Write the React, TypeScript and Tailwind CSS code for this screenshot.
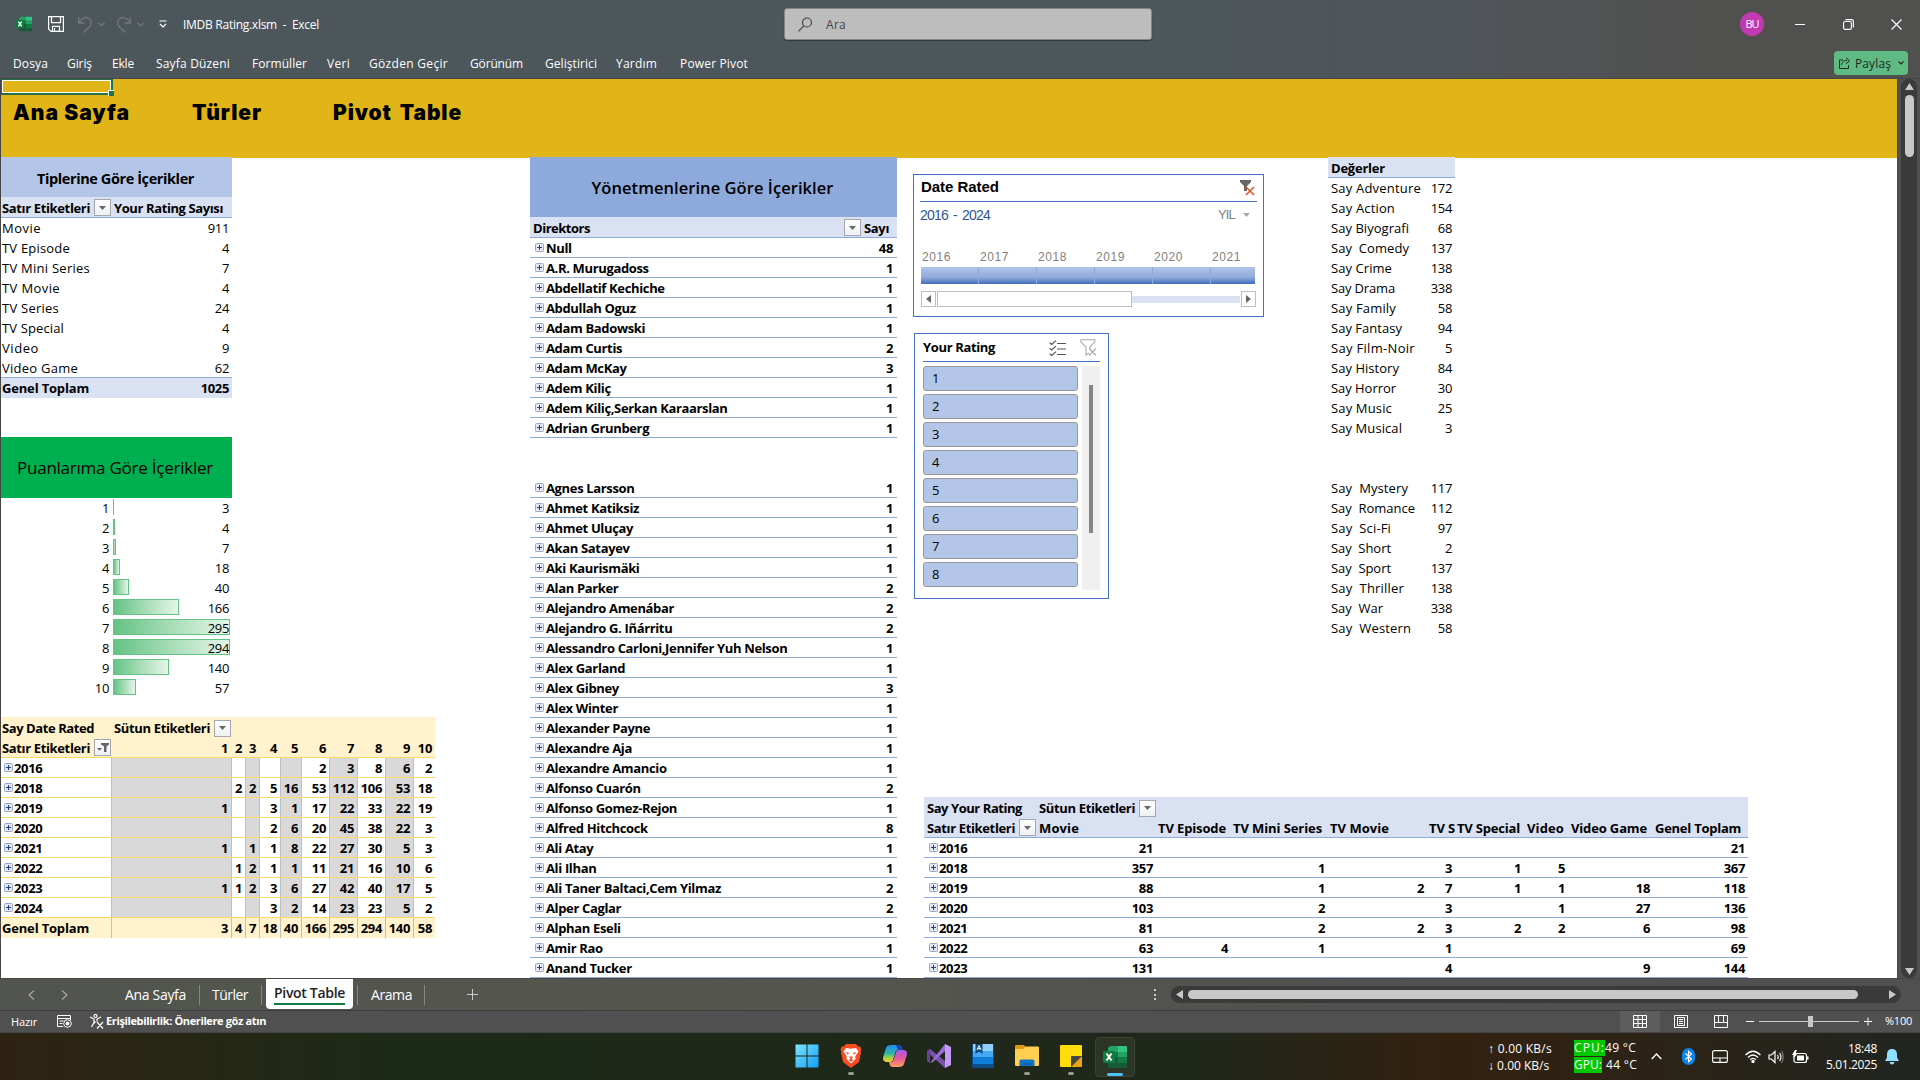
import React, { useLayoutEffect, useRef } from "react";

/** Text whose tracking is tuned so that it takes up the given width. */
function Fit({ w, className = "", children }: { w: number; className?: string; children: string }) {
  const ref = useRef<HTMLSpanElement>(null);
  useLayoutEffect(() => {
    const el = ref.current;
    if (!el) return;
    el.style.letterSpacing = "0px";
    const natural = el.getBoundingClientRect().width;
    el.style.letterSpacing = `${(w - natural) / children.length}px`;
  }, [w, children]);
  return (
    <span ref={ref} className={`inline-block shrink-0 whitespace-pre ${className}`}>
      {children}
    </span>
  );
}

const Gap = ({ w }: { w: number }) => <div className="shrink-0" style={{ width: w }} />;

function DropButton({ filtered = false }: { filtered?: boolean }) {
  return (
    <span className="flex h-[17px] w-[17px] shrink-0 items-center justify-center border border-[#a3a8b0] bg-linear-to-b from-white to-[#eef0f4]">
      {filtered ? (
        <svg width="12" height="11" viewBox="0 0 12 11" fill="#666">
          <path d="M4 1h8v1.500L9.500 4.500V10H7V4.500L4 2.500z" />
          <path d="M0 6h5L2.500 8.800z" />
        </svg>
      ) : (
        <svg width="7" height="4" viewBox="0 0 7 4">
          <path d="M0 0h7L3.500 4z" fill="#666" />
        </svg>
      )}
    </span>
  );
}

const Plus = () => (
  <svg className="mb-[1px] shrink-0" width="9" height="9" viewBox="0 0 9 9">
    <rect x=".5" y=".5" width="8" height="8" rx="1" fill="#e4e8ee" stroke="#9aa9c2" />
    <path d="M2 4.500h5M4.500 2v5" stroke="#26427c" />
  </svg>
);

/* ---------- data ---------- */

const types: [string, number, number][] = [
  ["Movie", 911, 39],
  ["TV Episode", 4, 68],
  ["TV Mini Series", 7, 88],
  ["TV Movie", 4, 58],
  ["TV Series", 24, 57],
  ["TV Special", 4, 62],
  ["Video", 9, 37],
  ["Video Game", 62, 76],
];

const scores: [number, number, number][] = [
  [1, 3, 1],
  [2, 4, 2],
  [3, 7, 3],
  [4, 18, 7],
  [5, 40, 16],
  [6, 166, 66],
  [7, 295, 117],
  [8, 294, 117],
  [9, 140, 56],
  [10, 57, 23],
];

const yearCols = [120, 14, 14, 21, 21, 28, 28, 28, 28, 22];
const years: [string, string[]][] = [
  ["2016", ["", "", "", "", "", "2", "3", "8", "6", "2"]],
  ["2018", ["", "2", "2", "5", "16", "53", "112", "106", "53", "18"]],
  ["2019", ["1", "", "", "3", "1", "17", "22", "33", "22", "19"]],
  ["2020", ["", "", "", "2", "6", "20", "45", "38", "22", "3"]],
  ["2021", ["1", "", "1", "1", "8", "22", "27", "30", "5", "3"]],
  ["2022", ["", "1", "2", "1", "1", "11", "21", "16", "10", "6"]],
  ["2023", ["1", "1", "2", "3", "6", "27", "42", "40", "17", "5"]],
  ["2024", ["", "", "", "3", "2", "14", "23", "23", "5", "2"]],
];

const directors: [string, number][] = [
  ["Null", 48],
  ["A.R. Murugadoss", 1],
  ["Abdellatif Kechiche", 1],
  ["Abdullah Oguz", 1],
  ["Adam Badowski", 1],
  ["Adam Curtis", 2],
  ["Adam McKay", 3],
  ["Adem Kiliç", 1],
  ["Adem Kiliç,Serkan Karaarslan", 1],
  ["Adrian Grunberg", 1],
];
const directors2: [string, number][] = [
  ["Agnes Larsson", 1],
  ["Ahmet Katiksiz", 1],
  ["Ahmet Uluçay", 1],
  ["Akan Satayev", 1],
  ["Aki Kaurismäki", 1],
  ["Alan Parker", 2],
  ["Alejandro Amenábar", 2],
  ["Alejandro G. Iñárritu", 2],
  ["Alessandro Carloni,Jennifer Yuh Nelson", 1],
  ["Alex Garland", 1],
  ["Alex Gibney", 3],
  ["Alex Winter", 1],
  ["Alexander Payne", 1],
  ["Alexandre Aja", 1],
  ["Alexandre Amancio", 1],
  ["Alfonso Cuarón", 2],
  ["Alfonso Gomez-Rejon", 1],
  ["Alfred Hitchcock", 8],
  ["Ali Atay", 1],
  ["Ali Ilhan", 1],
  ["Ali Taner Baltaci,Cem Yilmaz", 2],
  ["Alper Caglar", 2],
  ["Alphan Eseli", 1],
  ["Amir Rao", 1],
  ["Anand Tucker", 1],
];

const genres: [string, number, number][] = [
  ["Say Adventure", 172, 90],
  ["Say Action", 154, 64],
  ["Say Biyografi", 68, 78],
  ["Say  Comedy", 137, 78],
  ["Say Crime", 138, 61],
  ["Say Drama", 338, 64],
  ["Say Family", 58, 65],
  ["Say Fantasy", 94, 71],
  ["Say Film-Noir", 5, 84],
  ["Say History", 84, 68],
  ["Say Horror", 30, 65],
  ["Say Music", 25, 61],
  ["Say Musical", 3, 71],
];
const genres2: [string, number, number][] = [
  ["Say  Mystery", 117, 77],
  ["Say  Romance", 112, 84],
  ["Say  Sci-Fi", 97, 60],
  ["Say  Short", 2, 60],
  ["Say  Sport", 137, 60],
  ["Say  Thriller", 138, 73],
  ["Say  War", 338, 52],
  ["Say  Western", 58, 80],
];

const typeCols: [string, number, number, number][] = [
  ["Movie", 120, 40, 3],
  ["TV Episode", 75, 68, 2],
  ["TV Mini Series", 97, 89, 2],
  ["TV Movie", 99, 59, 2],
  ["TV S", 28, 26, 2],
  ["TV Special", 69, 63, 2],
  ["Video", 44, 37, 3],
  ["Video Game", 85, 76, 3],
  ["Genel Toplam", 95, 86, 2],
];
const ratings: [string, string[]][] = [
  ["2016", ["21", "", "", "", "", "", "", "", "21"]],
  ["2018", ["357", "", "1", "", "3", "1", "5", "", "367"]],
  ["2019", ["88", "", "1", "2", "7", "1", "1", "18", "118"]],
  ["2020", ["103", "", "2", "", "3", "", "1", "27", "136"]],
  ["2021", ["81", "", "2", "2", "3", "2", "2", "6", "98"]],
  ["2022", ["63", "4", "1", "", "1", "", "", "", "69"]],
  ["2023", ["131", "", "", "", "4", "", "", "9", "144"]],
];

/* ---------- title bar ---------- */

const menu: [string, number, number][] = [
  ["Dosya", 35, 19],
  ["Giriş", 25, 20],
  ["Ekle", 22, 22],
  ["Sayfa Düzeni", 74, 22],
  ["Formüller", 55, 20],
  ["Veri", 23, 19],
  ["Gözden Geçir", 79, 22],
  ["Görünüm", 53, 22],
  ["Geliştirici", 52, 19],
  ["Yardım", 41, 23],
  ["Power Pivot", 68, 0],
];

function ExcelLogo({ size }: { size: number }) {
  return (
    <svg width={size} height={size} viewBox="0 0 24 24" className="shrink-0">
      <path d="M7 1h8v6H5V3z" fill="#21a366" />
      <path d="M15 1h8q1 0 1 1v5h-9z" fill="#33c481" />
      <path d="M5 7h10v6H5z" fill="#107c41" />
      <path d="M15 7h9v5h-9z" fill="#21a366" />
      <path d="M15 12h9v6h-9z" fill="#107c41" />
      <path d="M5 12h10v6h9v4q0 1-1 1H6q-1 0-1-1z" fill="#185c37" />
      <rect x="0" y="6" width="12" height="12" rx="1" fill="#107c41" />
      <path d="M3.500 8.500l5 7M8.500 8.500l-5 7" stroke="#fff" strokeWidth="1.900" />
    </svg>
  );
}

function TitleBar() {
  return (
    <header className="h-[79px] shrink-0 border-b border-[#464646] bg-linear-to-r from-[#4c565b] from-60% via-[#50555a] via-76% to-[#50514f] to-88% font-['Open_Sans',sans-serif] text-white">
      <div className="flex h-12 items-center">
        <Gap w={16} />
        <ExcelLogo size={16} />
        <Gap w={16} />
        <svg width="16" height="16" viewBox="0 0 16 16" fill="none" stroke="#fff" strokeWidth="1.200">
          <path d="M.6.6h14.800v14.800H3L.6 13z" />
          <path d="M3.500.6v6h9v-6M4.500 15.400v-5h7v5M6.500 12v3" />
        </svg>
        <Gap w={14} />
        <svg width="14" height="17" viewBox="0 0 14 17" fill="none" stroke="#73787b" strokeWidth="1.300">
          <path d="M.7 1v6h5.800M1 6.500C4 1.500 8 .5 11 2.500s3 6 .5 8.500L5.500 16.500" />
        </svg>
        <Gap w={6} />
        <svg width="7" height="5" viewBox="0 0 7 5" fill="none" stroke="#73787b" strokeWidth="1.300">
          <path d="M.5.7l3 3 3-3" />
        </svg>
        <Gap w={12} />
        <svg width="14" height="17" viewBox="0 0 14 17" fill="none" stroke="#73787b" strokeWidth="1.300">
          <path d="M13.300 1v6H7.500M13 6.500C10 1.500 6 .5 3 2.500s-3 6-.5 8.500l6 5.500" />
        </svg>
        <Gap w={6} />
        <svg width="7" height="5" viewBox="0 0 7 5" fill="none" stroke="#73787b" strokeWidth="1.300">
          <path d="M.5.7l3 3 3-3" />
        </svg>
        <Gap w={15} />
        <svg width="8" height="8" viewBox="0 0 8 8" fill="none" stroke="#fff" strokeWidth="1.200">
          <path d="M.5 1h7M1 4l3 3 3-3" />
        </svg>
        <Gap w={16} />
        <Fit w={136} className="mt-[1px] text-[12px]">{"IMDB Rating.xlsm  -  Excel"}</Fit>
        <Gap w={465} />
        <div className="flex h-8 w-[368px] shrink-0 items-center rounded-[3px] border border-[#828688] bg-[#bdbdbd] shadow-[0_1px_1px_#30383c]">
          <Gap w={13} />
          <svg width="15" height="15" viewBox="0 0 15 15" fill="none" stroke="#444" strokeWidth="1.200">
            <circle cx="9" cy="5.500" r="4.500" />
            <path d="M5.800 8.800L.5 14.300" />
          </svg>
          <Gap w={13} />
          <Fit w={20} className="mt-[1px] text-[12px] text-[#444]">Ara</Fit>
        </div>
        <Gap w={588} />
        <div className="flex h-6 w-6 shrink-0 items-center justify-center rounded-full bg-[#c239b3] text-[11px]">
          <Fit w={13}>BU</Fit>
        </div>
        <Gap w={31} />
        <div className="h-px w-[10px] shrink-0 bg-white" />
        <Gap w={38} />
        <svg width="11" height="11" viewBox="0 0 11 11" fill="none" stroke="#fff" strokeWidth="1.100">
          <rect x=".6" y="2.500" width="7.800" height="7.900" rx="1.500" />
          <path d="M2.500.6H8.500Q10.400.6 10.400 2.500V8.500" />
        </svg>
        <Gap w={37} />
        <svg width="11" height="11" viewBox="0 0 11 11" fill="none" stroke="#fff" strokeWidth="1.100">
          <path d="M.5.5l10 10M10.500.5l-10 10" />
        </svg>
      </div>
      <div className="flex h-[30px] items-center text-[12px]">
        <Gap w={13} />
        {menu.map(([label, w, gap]) => (
          <React.Fragment key={label}>
            <Fit w={w} className="mt-[2px]">{label}</Fit>
            <Gap w={gap} />
          </React.Fragment>
        ))}
        <div className="mr-3 ml-auto flex h-6 w-[74px] items-center rounded-[4px] bg-[#5fbb83] pl-[5px] text-[#1f2a23]">
          <svg width="12" height="12" viewBox="0 0 12 12" fill="none" stroke="#1f2a23" strokeWidth="1">
            <path d="M4 3H.5v8.500h9V8M2.500 8C3 4.500 5 3.500 8 3.500M7 .8l3.500 3L7 6.800" />
          </svg>
          <Gap w={4} />
          <Fit w={36} className="mt-[1px]">Paylaş</Fit>
          <Gap w={7} />
          <svg width="6" height="4" viewBox="0 0 6 4" fill="none" stroke="#1f2a23" strokeWidth="1.200">
            <path d="M.5.5L3 3 5.500.5" />
          </svg>
        </div>
      </div>
    </header>
  );
}

/* ---------- sheet ---------- */

function Banner() {
  return (
    <div className="relative flex h-[79px] items-center bg-[#e1b517] font-[Inter,sans-serif] text-[21px] font-black text-black">
      <div className="absolute -top-px -left-px h-[17px] w-[113px] border-2 border-[#217346]">
        <div className="h-full w-full border border-white" />
        <div className="absolute -right-[3px] -bottom-[3px] h-[6px] w-[6px] border-t border-l border-white bg-[#217346]" />
      </div>
      <Gap w={12} />
      <Fit w={117} className="mt-[-11px]">Ana Sayfa</Fit>
      <Gap w={62} />
      <Fit w={70} className="mt-[-11px]">Türler</Fit>
      <Gap w={71} />
      <Fit w={129} className="mt-[-11px] [word-spacing:3px]">Pivot Table</Fit>
    </div>
  );
}

function TypeTable() {
  return (
    <section className="w-[231px]">
      <div className="flex h-10 items-center justify-center bg-[#b4c6e7] text-[14.5px] font-bold">
        <Fit w={157} className="mt-[3px] mr-[2px]">Tiplerine Göre İçerikler</Fit>
      </div>
      <div className="flex h-[21px] items-center border-b border-[#8ea9db] bg-[#d9e1f2] pt-px pl-[1px] font-bold">
        <Fit w={88}>Satır Etiketleri</Fit>
        <Gap w={4} />
        <DropButton />
        <Gap w={3} />
        <Fit w={109}>Your Rating Sayısı</Fit>
      </div>
      {types.map(([n, v, w], i) => (
        <div key={n} className={`flex h-5 items-center justify-between pr-[3px] pl-[1px] ${i === 7 ? "border-b border-[#8ea9db]" : ""}`}>
          <Fit w={w}>{n}</Fit>
          <span>{v}</span>
        </div>
      ))}
      <div className="flex h-5 items-center justify-between bg-[#d9e1f2] pr-[3px] pl-[1px] font-bold">
        <Fit w={87}>Genel Toplam</Fit>
        <span>1025</span>
      </div>
    </section>
  );
}

function ScoreTable() {
  return (
    <section className="mt-[39px] w-[231px]">
      <div className="flex h-[61px] items-center justify-center bg-[#00b050] text-[17px]">
        <Fit w={196} className="mt-[1px] mr-[3px]">Puanlarıma Göre İçerikler</Fit>
      </div>
      {scores.map(([n, v, w]) => (
        <div key={n} className="flex h-5 items-center">
          <span className="w-[108px] text-right">{n}</span>
          <div className="relative ml-[4px] flex h-5 w-[119px] items-center justify-end pr-[3px]">
            <div
              className="absolute top-[1px] left-0 h-4 border border-[#63c384] bg-linear-to-r from-[#63c384] to-[#e5f5ea]"
              style={{ width: w, borderRightWidth: w < 2 ? 0 : 1 }}
            />
            <span className="relative">{v}</span>
          </div>
        </div>
      ))}
    </section>
  );
}

function YearTable() {
  return (
    <section className="mt-[19px] w-[434px] font-bold">
      <div className="flex h-[21px] items-center bg-[#fff2cc] pt-px pl-[1px]">
        <Fit w={92}>Say Date Rated</Fit>
        <Gap w={20} />
        <Fit w={96}>Sütun Etiketleri</Fit>
        <Gap w={4} />
        <DropButton />
      </div>
      <div className="flex h-5 items-center border-b border-[#ffd966] bg-[#fff2cc]">
        <div className="flex w-[110px] items-center pl-[1px]">
          <Fit w={88}>Satır Etiketleri</Fit>
          <Gap w={4} />
          <DropButton filtered />
        </div>
        {yearCols.map((w, i) => (
          <span key={i} className="pr-[3px] text-right" style={{ width: w }}>
            {i + 1}
          </span>
        ))}
      </div>
      {years.map(([y, vals]) => (
        <div key={y} className="flex h-5 border-b border-[#ffd966]">
          <div className="flex w-[110px] items-center gap-[1px] pl-[3px]">
            <Plus />
            <span>{y}</span>
          </div>
          {vals.map((v, i) => (
            <span
              key={i}
              className={`border-l border-[#bfbfbf] pr-[3px] text-right ${i % 2 === 0 ? "bg-[#d9d9d9]" : ""}`}
              style={{ width: yearCols[i] }}
            >
              {v}
            </span>
          ))}
        </div>
      ))}
      <div className="flex h-5 bg-[#fff2cc]">
        <div className="w-[110px] pl-[1px]">
          <Fit w={87}>Genel Toplam</Fit>
        </div>
        {[3, 4, 7, 18, 40, 166, 295, 294, 140, 58].map((v, i) => (
          <span key={i} className="border-l border-[#bfbfbf] pr-[3px] text-right" style={{ width: yearCols[i] }}>
            {v}
          </span>
        ))}
      </div>
    </section>
  );
}

function DirectorRows({ rows }: { rows: [string, number][] }) {
  return (
    <>
      {rows.map(([n, v]) => (
        <div key={n} className="flex h-5 items-center border-b border-[#8ea9db] pr-[4px] pl-[5px]">
          <Plus />
          <span className="ml-[2px] flex-1 whitespace-pre">{n}</span>
          <span>{v}</span>
        </div>
      ))}
    </>
  );
}

function DirectorTable() {
  return (
    <section className="ml-[95px] w-[367px] shrink-0 font-bold">
      <div className="flex h-[60px] items-center justify-center bg-[#8ea9db] text-[16.5px] font-semibold">
        <Fit w={242} className="mt-[1px] mr-[2px]">Yönetmenlerine Göre İçerikler</Fit>
      </div>
      <div className="flex h-[21px] items-center border-b border-[#8ea9db] bg-[#d9e1f2] pt-px pl-[3px]">
        <Fit w={57}>Direktors</Fit>
        <Gap w={254} />
        <DropButton />
        <Gap w={3} />
        <Fit w={25}>Sayı</Fit>
      </div>
      <DirectorRows rows={directors} />
      <div className="h-10" />
      <DirectorRows rows={directors2} />
    </section>
  );
}

function Timeline() {
  return (
    <div className="h-[143px] w-[351px] border border-[#4472c4] px-[6px] font-['Liberation_Sans',sans-serif] tracking-normal">
      <div className="flex h-[27px] items-center border-b border-[#4472c4] pl-[1px]">
        <Fit w={78} className="mt-[-2px] text-[15px] font-bold text-black">Date Rated</Fit>
        <Gap w={241} />
        <svg width="15" height="16" viewBox="0 0 15 16">
          <path d="M0 0h11v2L7 6v5H4V6L0 2z" fill="#666" />
          <path d="M6 7l8 8M14 7l-8 8" stroke="#e0522d" strokeWidth="1.600" />
        </svg>
      </div>
      <div className="flex h-[26px] items-center text-[14px]">
        <Fit w={70} className="mt-[-1px] [word-spacing:2px] text-[#2f5597]">2016 - 2024</Fit>
        <Gap w={228} />
        <Fit w={17} className="text-[13px] text-[#7f7f7f]">YIL</Fit>
        <Gap w={8} />
        <svg width="7" height="4" viewBox="0 0 7 4">
          <path d="M0 0h7L3.500 4z" fill="#aaa" />
        </svg>
      </div>
      <div className="mt-[18px] flex h-[20px] items-center overflow-hidden pt-[2px] pl-[2px] text-[12px] text-[#7f7f7f]">
        {["2016", "2017", "2018", "2019", "2020", "2021"].map((y) => (
          <div key={y} className="w-[58px] shrink-0">
            <Fit w={29}>{y}</Fit>
          </div>
        ))}
      </div>
      <div className="mt-px ml-[1px] flex h-[17px] w-[334px] overflow-hidden bg-linear-to-b from-[#b0c4e8] via-[#93abdb] via-60% to-[#3f6cbd]">
        {[0, 1, 2, 3, 4].map((i) => (
          <div key={i} className="w-[58px] shrink-0 border-r border-[#8ea9db]" />
        ))}
      </div>
      <div className="mt-[7px] ml-[1px] flex h-[16px] w-[335px] items-center">
        <span className="mr-[1px] flex h-4 w-[15px] items-center justify-center border border-[#bfbfbf]">
          <svg width="5" height="8" viewBox="0 0 5 8"><path d="M5 0v8L0 4z" fill="#666" /></svg>
        </span>
        <span className="h-4 w-[195px] border border-[#bfbfbf]" />
        <span className="h-[7px] w-[108px] bg-[#d9e1f2]" />
        <span className="ml-[1px] flex h-4 w-[15px] items-center justify-center border border-[#bfbfbf]">
          <svg width="5" height="8" viewBox="0 0 5 8"><path d="M0 0v8L5 4z" fill="#666" /></svg>
        </span>
      </div>
    </div>
  );
}

function Slicer() {
  return (
    <div className="mt-4 ml-[1px] h-[266px] w-[195px] border border-[#4472c4] px-[8px]">
      <div className="flex h-[28px] items-center border-b border-[#4472c4]">
        <Fit w={72} className="mt-[-1px] font-bold">Your Rating</Fit>
        <Gap w={54} />
        <svg width="17" height="16" viewBox="0 0 17 16" fill="none" stroke="#555" strokeWidth="1.200">
          <path d="M8 3.500h9M8 9h9M8 14.500h9M.7 2.800l2 1.700L7 .6M.7 8.300l2 1.700L7 6.100M.7 13.800l2 1.700L7 11.600" />
        </svg>
        <Gap w={14} />
        <svg width="17" height="17" viewBox="0 0 17 17" fill="none" stroke="#aaa" strokeWidth="1.100">
          <path d="M.8.8h14v2L10 8v2M.8.8v2L6 8v8l3-2M9 9.500l7 7M16 9.500l-7 7" />
        </svg>
      </div>
      <div className="mt-[4px] flex justify-between">
        <div className="flex w-[155px] flex-col gap-[3px]">
          {[1, 2, 3, 4, 5, 6, 7, 8].map((n) => (
            <div key={n} className="flex h-[25px] items-center rounded-[3px] border border-[#979797] bg-[#b4c6e7] pb-px pl-[8px]">
              {n}
            </div>
          ))}
        </div>
        <div className="h-[224px] w-[18px] bg-[#f0f0f0] pt-[19px]">
          <div className="mx-auto h-[148px] w-[4px] bg-[#858585]" />
        </div>
      </div>
    </div>
  );
}

function GenreRows({ rows }: { rows: [string, number, number][] }) {
  return (
    <>
      {rows.map(([n, v, w]) => (
        <div key={n} className="flex h-5 items-center justify-between pr-[3px] pl-[3px]">
          <Fit w={w}>{n}</Fit>
          <span>{v}</span>
        </div>
      ))}
    </>
  );
}

function GenreTable() {
  return (
    <section className="ml-[64px] w-[127px]">
      <div className="flex h-[21px] items-center border-b border-[#8ea9db] bg-[#d9e1f2] pt-px pl-[3px] font-bold">
        <Fit w={54}>Değerler</Fit>
      </div>
      <GenreRows rows={genres} />
      <div className="h-10" />
      <GenreRows rows={genres2} />
    </section>
  );
}

function RatingPivot() {
  return (
    <section className="ml-[27px] w-[824px] font-bold">
      <div className="flex h-[21px] items-center bg-[#d9e1f2] pt-px pl-[3px]">
        <Fit w={95}>Say Your Rating</Fit>
        <Gap w={17} />
        <Fit w={96}>Sütun Etiketleri</Fit>
        <Gap w={4} />
        <DropButton />
      </div>
      <div className="flex h-5 items-center border-b border-[#8ea9db] bg-[#d9e1f2]">
        <div className="flex w-[112px] shrink-0 items-center pl-[3px]">
          <Fit w={88}>Satır Etiketleri</Fit>
          <Gap w={4} />
          <DropButton />
        </div>
        {typeCols.map(([n, w, tw, pad]) => (
          <div key={n} className="shrink-0" style={{ width: w, paddingLeft: pad }}>
            <Fit w={tw}>{n}</Fit>
          </div>
        ))}
      </div>
      {ratings.map(([y, vals]) => (
        <div key={y} className="flex h-5 items-center border-b border-[#8ea9db]">
          <div className="flex w-[112px] items-center gap-[1px] pl-[5px]">
            <Plus />
            <span>{y}</span>
          </div>
          {vals.map((v, i) => (
            <span key={i} className="pr-[3px] text-right" style={{ width: typeCols[i][1] }}>
              {v}
            </span>
          ))}
        </div>
      ))}
    </section>
  );
}

function Sheet() {
  return (
    <div className="flex h-[899px] shrink-0 bg-[#505050]">
      <main className="w-[1898px] shrink-0 overflow-hidden border-r border-l border-[#464646] bg-white font-['Open_Sans',sans-serif] text-[13px] leading-[20px] tracking-[-0.35px] text-black">
        <Banner />
        <div className="-mt-px flex">
          <div className="relative w-[434px] shrink-0">
            <TypeTable />
            <ScoreTable />
            <YearTable />
          </div>
          <div className="relative">
            <DirectorTable />
          </div>
          <div className="relative w-[1000px] shrink-0">
            <div className="flex h-[640px]">
              <div className="mt-[17px] ml-[16px]">
                <Timeline />
                <Slicer />
              </div>
              <GenreTable />
            </div>
            <RatingPivot />
          </div>
        </div>
      </main>
      <div className="ml-[3px] flex w-[16px] flex-col items-center rounded-full bg-[#3a3a3a] pt-[4px] pb-[3px]">
        <svg width="9" height="7" viewBox="0 0 9 7"><path d="M4.500 0L9 7H0z" fill="#c8c8c8" /></svg>
        <div className="mt-[5px] h-[62px] w-[9px] rounded-full bg-[#c8c8c8]" />
        <svg className="mt-auto" width="9" height="7" viewBox="0 0 9 7"><path d="M4.500 7L9 0H0z" fill="#c8c8c8" /></svg>
      </div>
    </div>
  );
}

/* ---------- bottom bars ---------- */

const Sep = () => <div className="h-5 w-px shrink-0 bg-[#868782]" />;

function TabBar() {
  return (
    <div className="flex h-[33px] shrink-0 items-center border-t border-b border-t-[#464646] border-b-[#3d3d3d] bg-linear-to-r from-[#52544f] via-[#54564e] via-35% to-[#505050] to-90% font-['Open_Sans',sans-serif] text-[14px] text-white">
      <Gap w={28} />
      <svg width="7" height="10" viewBox="0 0 7 10" fill="none" stroke="#a8a8a4" strokeWidth="1.200"><path d="M6 .5L1 5l5 4.500" /></svg>
      <Gap w={26} />
      <svg width="7" height="10" viewBox="0 0 7 10" fill="none" stroke="#a8a8a4" strokeWidth="1.200"><path d="M1 .5L6 5 1 9.500" /></svg>
      <Gap w={57} />
      <Fit w={61} className="mt-[-1px]">Ana Sayfa</Fit>
      <Gap w={13} />
      <Sep />
      <Gap w={12} />
      <Fit w={36} className="mt-[-1px]">Türler</Fit>
      <Gap w={13} />
      <Sep />
      <Gap w={4} />
      <div className="mb-[2px] flex h-[30px] w-[87px] shrink-0 flex-col items-center rounded-b-[4px] bg-white pt-[4px] text-[#222]">
        <Fit w={71} className="leading-[20px] font-semibold">Pivot Table</Fit>
        <div className="h-[2px] w-[71px] bg-[#107c41]" />
      </div>
      <Gap w={4} />
      <Sep />
      <Gap w={13} />
      <Fit w={41} className="mt-[-1px]">Arama</Fit>
      <Gap w={12} />
      <Sep />
      <Gap w={42} />
      <svg width="11" height="11" viewBox="0 0 11 11" stroke="#ccc" strokeWidth="1"><path d="M0 5.500h11M5.500 0v11" /></svg>
      <div className="mr-[15px] ml-auto flex h-[11px] flex-col justify-between">
        {[0, 1, 2].map((i) => <span key={i} className="h-[2px] w-[2px] bg-[#ccc]" />)}
      </div>
      <div className="mr-[19px] mb-[1px] flex h-[17px] w-[730px] shrink-0 items-center justify-between rounded-full bg-[#3a3a3a] px-[5px]">
        <svg width="7" height="9" viewBox="0 0 7 9"><path d="M7 0v9L0 4.500z" fill="#c8c8c8" /></svg>
        <div className="mr-auto ml-[5px] h-[9px] w-[670px] rounded-full bg-[#c8c8c8]" />
        <svg width="7" height="9" viewBox="0 0 7 9"><path d="M0 0v9l7-4.500z" fill="#c8c8c8" /></svg>
      </div>
    </div>
  );
}

function StatusBar() {
  return (
    <div className="flex h-[22px] shrink-0 items-center border-b border-[#454545] bg-[#505050] font-['Open_Sans',sans-serif] text-[11px] text-white">
      <Gap w={11} />
      <Fit w={26} className="mt-[1px]">Hazır</Fit>
      <Gap w={20} />
      <svg width="15" height="13" viewBox="0 0 15 13" fill="none" stroke="#fff" strokeWidth="1">
        <path d="M6 11.500H.5V.5h13V5M.5 3.500h13M2.500 6h4M2.500 8.500h3" />
        <circle cx="10.500" cy="8.500" r="3.800" />
        <circle cx="10.500" cy="8.500" r="1.500" fill="#fff" />
      </svg>
      <Gap w={17} />
      <svg width="15" height="15" viewBox="0 0 15 15" fill="none" stroke="#fff" strokeWidth="1.200">
        <circle cx="6.500" cy="2" r="1.500" />
        <path d="M1 3l4 2v3.500L2.500 13M12 3L8 5v2.500M5 9.500l1.500-2M8 8l6 6.500M14 8l-6 6.500" />
      </svg>
      <Gap w={2} />
      <Fit w={160} className="font-bold">Erişilebilirlik: Önerilere göz atın</Fit>
      <div className="ml-auto flex h-full w-10 shrink-0 items-center justify-center bg-[#5d5d5d]">
        <svg width="14" height="13" viewBox="0 0 14 13" fill="none" stroke="#fff" strokeWidth="1">
          <path d="M.5.5h13v12H.5zM.5 4.500h13M.5 8.500h13M5 .5v12M9.500.5v12" />
        </svg>
      </div>
      <Gap w={14} />
      <svg width="14" height="13" viewBox="0 0 14 13" fill="none" stroke="#fff" strokeWidth="1">
        <path d="M.5.5h13v12H.5zM3.500 2.500h7v8h-7zM5 4.500h4M5 6.500h4M5 8.500h4" />
      </svg>
      <Gap w={26} />
      <svg width="14" height="13" viewBox="0 0 14 13" fill="none" stroke="#fff" strokeWidth="1">
        <path d="M.5.5h13v12H.5zM4.500.5v7h5v-7M.5 7.500h4M9.500 7.500h4" />
      </svg>
      <Gap w={18} />
      <div className="h-px w-[8px] shrink-0 bg-white" />
      <Gap w={5} />
      <div className="flex w-[100px] shrink-0 items-center">
        <div className="h-px w-[49px] bg-[#c8c8c8]" />
        <div className="h-[11px] w-[5px] bg-[#c8c8c8]" />
        <div className="h-px flex-1 bg-[#c8c8c8]" />
      </div>
      <Gap w={5} />
      <svg width="8" height="9" viewBox="0 0 8 9" stroke="#fff"><path d="M0 4.500h8M4 .5v8" /></svg>
      <Gap w={13} />
      <Fit w={27}>%100</Fit>
      <Gap w={8} />
    </div>
  );
}

const dock: { dot?: boolean; icon: React.ReactNode }[] = [
  {
    icon: (
      <svg width="24" height="24" viewBox="0 0 24 24">
        <defs>
          <linearGradient id="win" x1="0" y1="0" x2="1" y2="1"><stop stopColor="#7fe6ff" /><stop offset="1" stopColor="#0f9cf5" /></linearGradient>
        </defs>
        <path d="M.5.5h11v11H.5zM12.500.5h11v11h-11zM.5 12.500h11v11H.5zM12.500 12.500h11v11h-11z" fill="url(#win)" />
      </svg>
    ),
  },
  {
    dot: true,
    icon: (
      <svg width="24" height="24" viewBox="0 0 24 24">
        <path d="M7 0h10l2 2.500 2-.3 1.500 3.300-.8 2 .3 1-2 9.500L12 24l-8-6L2 8.500l.3-1-.8-2L3 2.200l2 .3z" fill="#fb4b20" />
        <path d="M7 4l5 .8L17 4l2.500 3.500-3.300 5 .4 2.500L12 19.500 7.400 15l.4-2.500-3.300-5z" fill="#fff" />
        <path d="M6.500 8l3.500.8-1 2zM17.500 8l-3.500.8 1 2zM10 12.500h4l-1.500 2.500h-1zM9.500 16l2.500-1.200 2.500 1.200-2.500 1.800z" fill="#fb4b20" />
      </svg>
    ),
  },
  {
    icon: (
      <svg width="24" height="24" viewBox="0 0 24 24">
        <defs>
          <linearGradient id="cpa" x1="0" y1="0" x2="0" y2="1"><stop stopColor="#1b8df2" /><stop offset=".5" stopColor="#2fb6a8" /><stop offset=".75" stopColor="#9cd24a" /><stop offset="1" stopColor="#ffcb2e" /></linearGradient>
          <linearGradient id="cpb" x1="0" y1="0" x2="0" y2="1"><stop stopColor="#a55af0" /><stop offset=".5" stopColor="#e8589b" /><stop offset="1" stopColor="#ff9d5c" /></linearGradient>
        </defs>
        <path d="M8 1h8q2 0 2.600 2l1 3H15q-2 0-2.600 2L10 16q-.6 2-2.500 2H4Q-1 18 .3 12.500L3 4q1-3 5-3z" fill="url(#cpa)" />
        <path d="M13 1h3q2 0 2.600 2l1 3H15z" fill="#1344b8" />
        <path d="M16 23H9.500q-2 0-2.600-2L6 18h2.500q1.500 0 2-2L13 8q.7-2 2.500-2H20q5 0 3.700 5.500L21 20q-1 3-5 3z" fill="url(#cpb)" />
      </svg>
    ),
  },
  {
    icon: (
      <svg width="24" height="24" viewBox="0 0 24 24">
        <path d="M0 7.500L3 5l15 12v7L3 10.500V14L0 17z" fill="#7b52ab" />
        <path d="M0 7l3-2v14l-3-2z" fill="#6a4398" />
        <path d="M3 19L18 0v7L6 18z" fill="#9a6bd4" />
        <path d="M18 0l6 3v18l-6 3z" fill="#c29bf5" />
      </svg>
    ),
  },
  {
    icon: (
      <svg width="22" height="24" viewBox="0 0 22 24">
        <rect x="0" y="0" width="22" height="24" rx="1.500" fill="#0c4f8a" />
        <path d="M1 0h20v7H1z" fill="#8fd0fb" />
        <path d="M1 7h20v6H1z" fill="#45a8f2" />
        <path d="M1 13h20v7H1z" fill="#0f7fd8" />
        <path d="M3.500 0h7v10L7 7.500 3.500 10z" fill="#0e4775" />
        <path d="M5 6l2-4.500L9 6M5.700 4.700h2.600" stroke="#fff" fill="none" />
      </svg>
    ),
  },
  {
    dot: true,
    icon: (
      <svg width="24" height="22" viewBox="0 0 24 22">
        <path d="M0 1q0-1 1-1h8l2.500 3H10L8 5H0z" fill="#e09a12" />
        <path d="M0 4h8l2.500-2.500H23q1 0 1 1V20q0 1-1 1H1q-1 0-1-1z" fill="#ffd050" />
        <path d="M4.500 21v-5q0-1.500 1.500-1.500h12q1.500 0 1.500 1.500v5z" fill="#1273c9" />
        <path d="M8 19h8" stroke="#0a4c91" />
      </svg>
    ),
  },
  {
    dot: true,
    icon: (
      <svg width="22" height="22" viewBox="0 0 22 22">
        <path d="M1 0h20q1 0 1 1v10L11 22H1q-1 0-1-1V1q0-1 1-1z" fill="#ffdd0c" />
        <path d="M22 11v10q0 1-1 1H11z" fill="#eba510" />
        <path d="M11 22V12q0-1 1-1h10z" fill="#454545" />
      </svg>
    ),
  },
];

function Taskbar() {
  return (
    <footer className="flex h-[47px] items-center overflow-hidden bg-linear-to-r from-[#2e2312] via-[#1d2a17] via-20% to-[#22251f] font-['Open_Sans',sans-serif] text-[12px] text-white">
      <Gap w={785} />
      {dock.map((d, i) => (
        <div key={i} className="flex h-full w-[44px] shrink-0 flex-col items-center pt-[11px]">
          <div className="flex h-6 items-center">{d.icon}</div>
          {d.dot && <div className="mt-[4px] h-[3px] w-[6px] rounded-full bg-[#9a9a94]" />}
        </div>
      ))}
      <div className="ml-[2px] flex h-10 w-10 shrink-0 flex-col items-center rounded-[4px] border border-[#3c4434] bg-[#2d3527] pt-[7px]">
        <ExcelLogo size={24} />
        <div className="mt-[4px] h-[3px] w-4 shrink-0 rounded-full bg-[#4cc2ff]" />
      </div>
      <div className="ml-[65px] flex h-full flex-1 items-center bg-linear-to-r from-[#22250f]/0 via-[#33210f] via-35% to-[#22251f] to-95%">
        <Gap w={288} />
        <div className="flex flex-col leading-[17px]">
          <Fit w={64}>↑ 0.00 KB/s</Fit>
          <Fit w={64}>↓ 0.00 KB/s</Fit>
        </div>
        <Gap w={22} />
        <div className="flex flex-col gap-[1px] leading-[16px]">
          <div className="flex"><span className="bg-[#00c800]"><Fit w={31}>CPU:</Fit></span><Fit w={31}>49 °C</Fit></div>
          <div className="flex"><span className="mr-[4px] bg-[#00c800]"><Fit w={28}>GPU:</Fit></span><Fit w={31}>44 °C</Fit></div>
        </div>
        <Gap w={14} />
        <svg width="11" height="7" viewBox="0 0 11 7" fill="none" stroke="#fff" strokeWidth="1.400"><path d="M.7 6l4.800-5 4.800 5" /></svg>
        <Gap w={20} />
        <svg width="13" height="17" viewBox="0 0 13 17">
          <rect width="13" height="17" rx="6.500" fill="#0a84e8" />
          <path d="M3.500 5.500l6 5.500-3 2.700V3.300l3 2.700-6 5.500" fill="none" stroke="#fff" strokeWidth="1.100" />
        </svg>
        <Gap w={17} />
        <svg width="16" height="13" viewBox="0 0 16 13" fill="none" stroke="#fff" strokeWidth="1.100">
          <rect x=".6" y=".6" width="14.800" height="11.800" rx="2" />
          <path d="M.6 8h14.800M8 8v4.500" />
        </svg>
        <Gap w={17} />
        <svg width="16" height="13" viewBox="0 0 16 13" fill="none" stroke="#fff" strokeWidth="1.300">
          <path d="M.6 5Q8-2.500 15.400 5M3 7.500q5-5 10 0M5.200 9.800q2.800-2.800 5.600 0" />
          <circle cx="8" cy="11.500" r="1" fill="#fff" />
        </svg>
        <Gap w={7} />
        <svg width="16" height="14" viewBox="0 0 16 14" fill="none" stroke="#fff" strokeWidth="1.200">
          <path d="M1 5h2.500L7 1.500v11L3.500 9H1zM9.500 5q1.500 2 0 4M11.500 3q3 4 0 8" />
          <path d="M13.500 1q3.500 6 0 12" stroke="#777" />
        </svg>
        <Gap w={8} />
        <svg width="17" height="14" viewBox="0 0 17 14">
          <rect x="2" y="3.500" width="12.500" height="9" rx="2" fill="none" stroke="#fff" strokeWidth="1.200" />
          <rect x="5" y="5.500" width="7" height="5" fill="#fff" />
          <path d="M15 6.500h1.500v3H15zM3 0L0 5h2L1.500 8.500 5.500 3.500H3.500L5 0z" fill="#fff" />
        </svg>
        <div className="ml-auto flex flex-col items-end leading-[16px]">
          <Fit w={29}>18:48</Fit>
          <Fit w={51}>5.01.2025</Fit>
        </div>
        <Gap w={8} />
        <svg width="14" height="16" viewBox="0 0 14 16" fill="#8fe0ff">
          <path d="M7 0q5 0 5 5.500v3l2 3.500H0l2-3.500v-3Q2 0 7 0zM4.500 13h5q-.5 2.500-2.500 2.500T4.500 13z" />
        </svg>
        <Gap w={21} />
      </div>
    </footer>
  );
}

export default function App() {
  return (
    <div className="flex h-[1080px] w-[1920px] flex-col overflow-hidden bg-[#505050]">
      <TitleBar />
      <Sheet />
      <TabBar />
      <StatusBar />
      <Taskbar />
    </div>
  );
}
